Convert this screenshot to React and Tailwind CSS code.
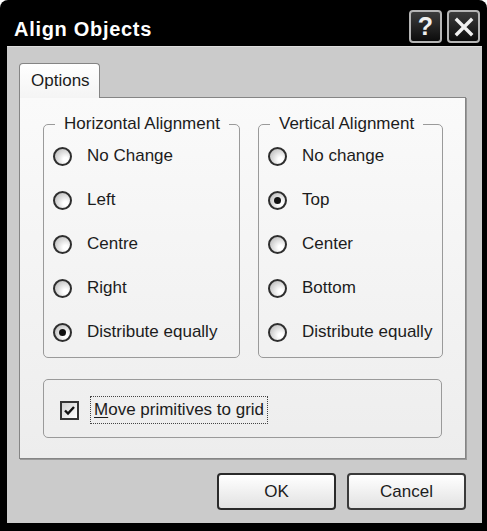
import React from "react";

function Radio({ checked }) {
  return (
    <span className="w-[19px] h-[19px] shrink-0 rounded-full border-[2px] border-[#2e2e2e] bg-[radial-gradient(circle_at_70%_70%,#ffffff_15%,#b0b0b0)] flex items-center justify-center">
      {checked && <span className="w-[7px] h-[7px] rounded-full bg-[#111]" />}
    </span>
  );
}

function Group({ title, items, checkedIndex, width }) {
  return (
    <fieldset className={`${width} h-[244px] border border-[#9a9a9a] rounded-[5px] px-[9px]`}>
      <legend className="ml-[2px] px-[9px] leading-[20px] text-[17px] text-[#1c1c1c]">{title}</legend>
      <div className="flex flex-col">
        {items.map((t, i) => (
          <div key={t} className="h-[44px] flex items-center gap-[15px] text-[17px] text-[#1c1c1c]">
            <Radio checked={i === checkedIndex} />
            <span>{t}</span>
          </div>
        ))}
      </div>
    </fieldset>
  );
}

export default function App() {
  return (
    <div className="w-[487px] h-[531px] bg-white font-['Liberation_Sans',Arial,sans-serif]">
      <div className="w-[487px] h-[531px] bg-black rounded-t-[8px] flex flex-col">
        {/* Title bar */}
        <div className="h-[46px] flex items-start shrink-0">
          <div className="mt-[17px] ml-[14px] leading-[24px] text-[20px] font-bold text-white tracking-[0.7px]">
            Align Objects
          </div>
          <div className="ml-auto mr-[7px] mt-[10px] flex gap-[5px]">
            <div className="w-[33px] h-[33px] rounded-[4px] border-2 border-[#b5b5b5] bg-[linear-gradient(#3c3c3c,#0c0c0c)] flex items-center justify-center text-[#f0f0f0] font-bold text-[25px] leading-none">
              ?
            </div>
            <div className="w-[33px] h-[33px] rounded-[4px] border-2 border-[#b5b5b5] bg-[linear-gradient(#3c3c3c,#0c0c0c)] flex items-center justify-center">
              <svg width="20" height="20" viewBox="0 0 20 20">
                <path d="M3 3 L17 17 M17 3 L3 17" stroke="#f0f0f0" strokeWidth="3.4" strokeLinecap="square" />
              </svg>
            </div>
          </div>
        </div>

        {/* Body */}
        <div className="flex-1 ml-[7px] mr-[5px] mb-[8px] bg-[#cbcbcb] border-t border-[#dedede] pt-[16px] pl-[12px] pr-[16px] flex flex-col">
          {/* Tab */}
          <div className="relative z-10 -mb-px w-[81px] h-[35px] border border-b-0 border-[#858585] rounded-t-[4px] bg-[linear-gradient(#ffffff,#f4f4f4)] pl-[11px] pt-[7px] text-[17px] leading-[20px] text-[#1c1c1c]">
            Options
          </div>
          {/* Panel */}
          <div className="h-[362px] border border-[#858585] bg-[linear-gradient(#fafafa,#ededed)] shadow-[1px_1px_0_#9a9a9a] pt-[16px] pl-[23px] flex flex-col">
            <div className="flex gap-[18px]">
              <Group
                title="Horizontal Alignment"
                items={["No Change", "Left", "Centre", "Right", "Distribute equally"]}
                checkedIndex={4}
                width="w-[197px]"
              />
              <Group
                title="Vertical Alignment"
                items={["No change", "Top", "Center", "Bottom", "Distribute equally"]}
                checkedIndex={1}
                width="w-[185px]"
              />
            </div>
            <div className="mt-[21px] w-[399px] h-[59px] border border-[#9a9a9a] rounded-[5px] flex items-center pl-[16px] pt-[3px]">
              <span className="w-[19px] h-[19px] shrink-0 border-2 border-[#333] bg-[linear-gradient(135deg,#cfcfcf,#ffffff)] flex items-center justify-center">
                <svg width="13" height="13" viewBox="0 0 13 13">
                  <path d="M2 6.5 L5 9.5 L11 3" fill="none" stroke="#111" strokeWidth="2.4" />
                </svg>
              </span>
              <span className="ml-[12px] px-[3px] py-[2px] outline outline-1 outline-dotted outline-[#444] text-[17px] leading-[22px] text-[#1c1c1c]">
                <span className="underline underline-offset-2">M</span>ove primitives to grid
              </span>
            </div>
          </div>
          {/* Buttons */}
          <div className="mt-[14px] flex justify-end gap-[11px]">
            <div className="w-[119px] h-[37px] rounded-[4px] border-2 border-[#2a2a2a] bg-[linear-gradient(#ffffff,#e2e2e2)] flex items-center justify-center text-[17px] text-[#1c1c1c]">
              OK
            </div>
            <div className="w-[119px] h-[37px] rounded-[4px] border-2 border-[#3a3a3a] bg-[linear-gradient(#ffffff,#e2e2e2)] flex items-center justify-center text-[17px] text-[#1c1c1c]">
              Cancel
            </div>
          </div>
        </div>
      </div>
    </div>
  );
}
